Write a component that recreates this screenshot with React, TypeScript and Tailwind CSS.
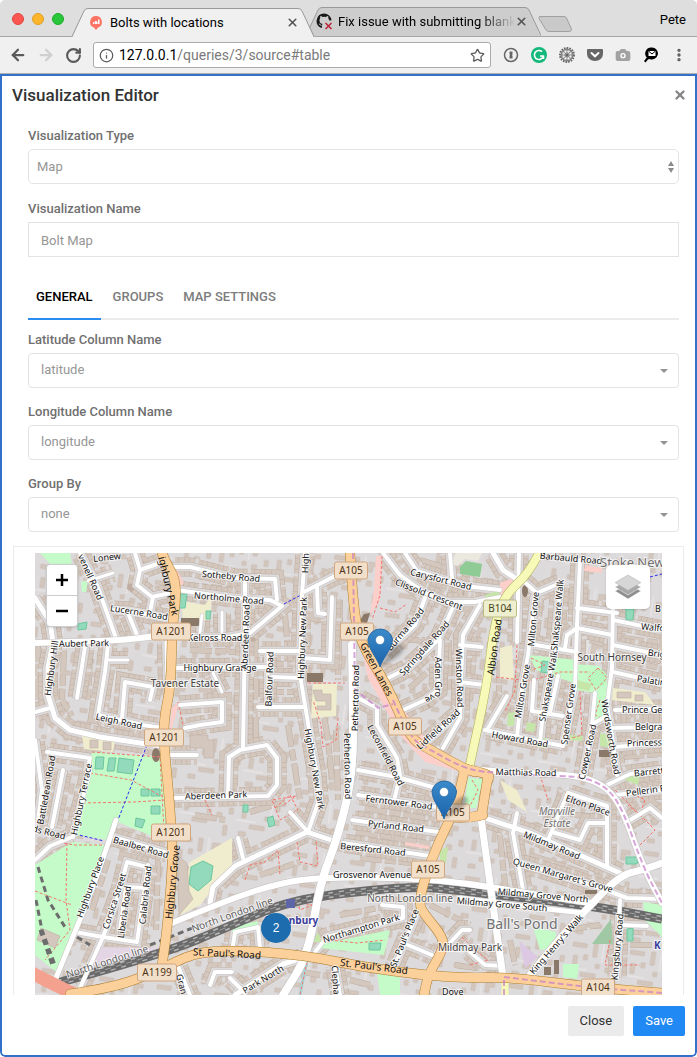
import React, { useState } from 'react';
import { ArrowLeft, ArrowRight, RotateCw, Info, Star, MoreVertical, Camera, X } from 'lucide-react';

type Point = [number, number];

type Road = { w: number; pts: string };

type Label = {
  text: string;
  x: number;
  y: number;
  r?: number;
  size?: number;
  kind?: 'road' | 'place' | 'district' | 'rail' | 'station' | 'estate';
  start?: boolean;
};

// Residential streets: stroke width and polyline
const STREETS: Road[] = [
  { w: 4, pts: '80,553 97,585 117,641' },
  { w: 4, pts: '112,610 130,611 167,618' },
  { w: 4, pts: '135,553 140,570 137,585 152,597 170,593' },
  { w: 4, pts: '140,570 160,563' },
  { w: 4, pts: '153,597 150,612' },
  { w: 4, pts: '128,613 137,635' },
  { w: 3, pts: '88,581 113,573' },
  { w: 5, pts: '35,598 50,622 53,642 48,668 48,695 55,718 70,730 100,737 147,744 162,746' },
  { w: 4, pts: '35,712 50,708' },
  { w: 4, pts: '85,647 77,698' },
  { w: 4, pts: '108,645 105,672 98,715 143,725 162,728' },
  { w: 3, pts: '108,660 128,660' },
  { w: 4, pts: '122,718 125,682 153,687 150,700' },
  { w: 4, pts: '173,567 190,567 235,578 275,579 277,600' },
  { w: 4, pts: '177,590 235,598 270,600 282,606 250,633 228,637 190,637' },
  { w: 3, pts: '202,615 200,632' },
  { w: 3, pts: '222,612 222,632' },
  { w: 4, pts: '245,580 245,632 243,748' },
  { w: 4, pts: '175,668 265,667' },
  { w: 3, pts: '166,642 167,685' },
  { w: 4, pts: '185,728 200,725 222,722 222,702 180,705' },
  { w: 3, pts: '213,673 222,692' },
  { w: 4, pts: '170,755 197,755' },
  { w: 4, pts: '228,795 229,757 240,750 267,745 277,758 277,785 268,796 175,798' },
  { w: 4, pts: '47,752 90,758 87,772' },
  { w: 4, pts: '35,740 42,790 38,820' },
  { w: 4, pts: '305,553 302,595 300,675 310,735 317,775 319,800 308,832' },
  { w: 4, pts: '302,593 333,577 350,572' },
  { w: 4, pts: '317,587 318,613 325,614' },
  { w: 4, pts: '332,597 330,660 303,658' },
  { w: 4, pts: '260,651 300,651' },
  { w: 4, pts: '272,677 302,678' },
  { w: 4, pts: '258,707 305,707' },
  { w: 3, pts: '268,655 268,705' },
  { w: 4, pts: '358,698 377,708 377,725 397,758 400,775 395,797' },
  { w: 4, pts: '383,553 400,575 425,593 447,602 475,602 500,597' },
  { w: 4, pts: '405,553 417,571 465,586 500,590' },
  { w: 4, pts: '450,553 452,578' },
  { w: 4, pts: '425,598 415,625 385,652' },
  { w: 4, pts: '454,605 438,640 408,668 388,678' },
  { w: 4, pts: '440,640 438,690 425,700 403,710' },
  { w: 4, pts: '480,605 463,635 461,680 460,718 443,748' },
  { w: 4, pts: '460,712 423,745' },
  { w: 4, pts: '460,645 482,647' },
  { w: 4, pts: '460,682 484,685' },
  { w: 5, pts: '493,553 503,570 518,580' },
  { w: 4, pts: '519,553 517,642' },
  { w: 4, pts: '520,578 537,593 560,583' },
  { w: 4, pts: '535,595 528,655 522,688 517,737' },
  { w: 4, pts: '560,585 555,645 543,712 540,742' },
  { w: 4, pts: '580,560 577,625 575,688 563,745' },
  { w: 4, pts: '530,644 577,652' },
  { w: 4, pts: '565,648 567,635 577,628 612,635' },
  { w: 4, pts: '577,608 617,613' },
  { w: 4, pts: '613,600 612,668 607,705 612,735 617,775' },
  { w: 4, pts: '613,620 662,630' },
  { w: 4, pts: '613,645 662,655' },
  { w: 4, pts: '613,672 662,683' },
  { w: 4, pts: '615,710 662,709' },
  { w: 4, pts: '610,728 662,727' },
  { w: 4, pts: '615,747 662,743' },
  { w: 4, pts: '532,711 563,716' },
  { w: 4, pts: '534,680 532,711' },
  { w: 4, pts: '558,676 550,712' },
  { w: 4, pts: '485,730 563,746' },
  { w: 4, pts: '507,696 487,730' },
  { w: 4, pts: '595,693 592,725 583,775' },
  { w: 4, pts: '592,724 607,716' },
  { w: 4, pts: '607,785 630,774 662,770' },
  { w: 4, pts: '615,795 662,790' },
  { w: 4, pts: '625,823 650,808 662,818' },
  { w: 5, pts: '485,818 530,833 620,873' },
  { w: 4, pts: '517,813 513,833 523,890' },
  { w: 4, pts: '568,793 548,840' },
  { w: 4, pts: '568,793 607,806 607,867' },
  { w: 4, pts: '552,832 580,840 588,823 607,823' },
  { w: 4, pts: '517,862 560,875 600,888 627,898 662,899' },
  { w: 4, pts: '620,900 617,977' },
  { w: 4, pts: '622,925 647,926' },
  { w: 4, pts: '358,795 437,807' },
  { w: 4, pts: '358,770 397,777 443,790' },
  { w: 4, pts: '352,820 438,832' },
  { w: 4, pts: '343,843 430,856' },
  { w: 4, pts: '417,913 393,970' },
  { w: 4, pts: '315,952 327,937 403,918 403,907 382,905' },
  { w: 4, pts: '403,943 432,955' },
  { w: 4, pts: '35,860 50,846 72,837' },
  { w: 4, pts: '110,836 167,853' },
  { w: 4, pts: '75,932 103,937 137,942 148,865' },
  { w: 4, pts: '80,988 103,937 120,890 127,862 147,867' },
  { w: 4, pts: '120,930 126,887 146,888' },
  { w: 4, pts: '90,770 73,837' },
  { w: 4, pts: '63,770 52,827' },
  { w: 5, pts: '210,903 213,887 235,866 307,832 337,842' },
  { w: 4, pts: '290,812 308,832' },
  { w: 4, pts: '238,838 243,858' },
  { w: 4, pts: '233,945 235,932 258,927 260,948' },
  { w: 4, pts: '230,978 245,993' },
  { w: 5, pts: '235,995 283,964 305,957' },
  { w: 4, pts: '335,966 340,995' },
  { w: 4, pts: '178,966 190,995' },
  { w: 4, pts: '210,985 215,972 232,972' },
  { w: 4, pts: '470,930 462,930 448,945' },
  { w: 4, pts: '468,950 485,965 503,966' },
];

// Back gardens: extra rows of houses with no street of their own
const TERRACES: string[] = [
  '38,640 36,700',
  '64,650 62,700 72,716',
  '90,650 88,700',
  '186,585 265,592',
  '190,650 235,652',
  '256,600 256,745',
  '285,615 288,650',
  '262,664 298,664',
  '262,692 298,692',
  '288,725 300,800',
  '318,680 328,740 333,790',
  '340,600 338,680',
  '336,730 338,800',
  '420,560 470,575',
  '397,640 425,640',
  '410,688 430,670',
  '449,640 449,690',
  '475,640 470,700',
  '380,770 350,760',
  '365,808 435,820',
  '356,832 432,844',
  '360,858 420,864',
  '500,660 498,720',
  '590,640 605,645',
  '622,638 660,643',
  '622,660 660,668',
  '622,718 660,718',
  '622,736 660,735',
  '622,757 660,754',
  '500,835 505,885',
  '535,825 600,850',
  '530,855 590,875',
  '535,870 600,895',
  '575,815 600,817',
  '340,915 395,905',
  '430,905 470,925',
  '510,940 515,965',
  '565,930 600,925',
  '630,945 655,945',
  '92,910 108,860',
  '158,860 156,930',
  '130,955 150,945',
  '260,965 320,975',
  '350,980 370,985',
  '455,965 490,970',
  '195,815 225,820',
  '250,812 285,802',
  '260,875 300,862',
];

// Wider unclassified roads
const WIDE_ROADS: Road[] = [
  { w: 6, pts: '35,643 113,641 150,637 168,634' },
  { w: 8, pts: '352,645 353,700 353,775 337,840 320,883 308,955 283,995' },
  { w: 6, pts: '460,767 490,772 556,774 583,777 607,787 623,810 643,867 662,903' },
  { w: 7, pts: '481,818 487,862 503,977' },
  { w: 7, pts: '662,863 643,870 620,875 583,913 560,938 530,975' },
  { w: 6, pts: '172,923 230,899 280,883 323,877 410,878 465,883 520,892 590,903' },
  { w: 5, pts: '460,898 520,906 583,913' },
  { w: 5, pts: '116,820 97,877 77,927 53,985' },
];

const A_ROADS: string[] = [
  '162,553 167,565 175,578 176,600 172,628 171,685 164,718 164,745 167,775 171,820 173,863 167,930 162,966',
  '350,553 353,605 360,642 387,685 410,738 427,748 463,768 475,772',
  '462,768 488,774 489,776 488,780',
  '488,776 484,800 482,814 478,816',
  '483,815 470,818 448,817',
  '464,772 457,805 447,825 430,862 418,903 425,915 443,937 443,950 428,975 424,995',
  '70,994 113,988 160,970 193,953 235,950 303,955 363,967 423,975 465,978 510,977 587,987 662,993',
];

const B_ROAD = '539,553 530,572 503,597 493,632 487,685 470,764';

const RAILWAY = '57,983 160,955 235,924 273,907 323,895 417,886 465,891 587,905 662,919';

const PARKS: string[] = [
  '40,553 70,553 73,573 52,566',
  '92,752 163,757 166,842 118,822 108,840 74,835',
  '72,842 107,845 60,975 35,955 35,865',
  '529,655 577,660 574,683 536,670',
  '575,664 600,666 610,690 604,720 594,722 596,693 577,690',
  '317,945 390,930 384,955 320,948',
  '377,972 400,973 400,995 380,995',
  '468,778 483,779 476,808 464,808',
  '533,927 556,932 555,948 540,950',
  '563,964 579,964 577,979 563,977',
  '643,902 662,905 662,937 645,920',
  '81,582 88,580 86,592 82,592',
  '232,927 258,921 258,928 232,935',
];

const GRASS: string[] = [
  '508,713 515,712 514,726 507,726',
  '527,722 536,724 534,732 526,731',
  '600,733 613,735 612,748 600,746',
  '618,777 640,774 638,785',
  '440,850 448,847 446,863 440,862',
  '485,595 500,590 498,600 486,601',
  '537,737 548,739 546,748 537,747',
  '570,735 583,736 582,741 569,740',
  '577,680 592,684 589,691 576,688',
  '313,942 318,932 322,942',
];

const PITCHES: string[] = [
  '96,757 104,757 103,769 95,769',
  '109,758 116,758 114,771 107,771',
  '119,758 134,760 132,774 117,772',
  '141,789 149,789 149,796 141,796',
  '151,789 160,789 160,796 151,796',
  '151,806 160,806 160,814 151,814',
  '136,818 145,820 142,828 135,826',
  '191,867 203,861 213,866 211,880 198,891 189,884',
  '180,594 187,594 185,608 179,608',
  '206,611 211,611 210,619 206,619',
  '78,624 87,622 86,629 78,630',
  '542,661 550,662 548,673 541,672',
  '626,609 634,609 633,620 626,620',
  '267,818 273,816 275,825 269,827',
  '369,943 381,943 380,950 369,950',
  '626,857 639,857 637,864 626,864',
  '627,929 633,928 633,941 627,941',
  '243,805 248,805 248,812 243,812',
];

const SCHOOLS: string[] = [
  '181,601 205,605 212,595 210,620 183,620',
  '313,684 337,684 336,716 311,718',
  '500,648 512,645 514,680 500,678',
  '82,736 115,741 113,752 84,749',
  '500,780 517,790 527,812 508,800',
  '190,862 232,838 232,865 200,905 180,915',
  '613,688 645,692 655,705 612,700',
  '125,808 137,813 134,826 124,822',
];

const RETAIL: string[] = [
  '362,650 378,662 400,705 432,747 462,764 462,772 425,762 400,735 368,678',
  '176,568 184,583 181,586 174,572',
  '172,708 180,700 172,728 168,738',
  '376,556 382,556 380,600 370,615 374,590',
  '500,583 516,577 510,592 500,594',
  '585,565 602,568 602,573 584,571',
  '405,842 430,846 428,849 405,845',
];

const FOOTPATHS: string[] = [
  '92,752 160,757 164,830',
  '90,773 131,780 163,797',
  '83,803 135,802 165,800',
  '67,843 66,900 70,930 45,960',
  '35,891 72,905',
  '107,845 75,845 62,843',
  '382,556 380,595 372,620',
  '380,608 395,612 407,604',
  '308,683 345,683',
  '338,718 336,740 323,747 321,725 313,700',
  '517,645 515,690 505,712',
  '496,677 530,681 560,672 590,672',
  '580,692 582,735 565,740',
  '531,658 545,665 532,670',
  '598,668 607,678 596,690 588,678 598,668',
  '600,700 595,715 605,720',
  '275,808 290,795 298,810 280,820 272,800 296,796 282,806',
  '245,880 250,865 265,862 278,850 280,875',
  '297,842 300,862 318,866 316,840',
  '296,897 300,910 312,905 298,902',
  '307,962 300,995',
  '330,940 357,943 385,940',
  '178,702 184,730',
  '205,800 212,815',
  '615,790 635,810 655,830 640,845',
  '632,793 645,800 640,815 628,805',
  '540,775 548,800',
  '610,940 605,965 640,965',
  '462,937 475,950 488,960 470,965',
  '472,780 478,790 470,806',
];

const LABELS: Label[] = [
  { text: 'venell Road', x: 91, y: 577, r: 66 },
  { text: 'Lonew', x: 107, y: 557, r: -6 },
  { text: 'ighbury Park', x: 169, y: 586, r: 77, size: 10 },
  { text: 'Sotheby Road', x: 231, y: 576, r: 5 },
  { text: 'Northolme Road', x: 229, y: 598, r: 5 },
  { text: 'Lucerne Road', x: 139, y: 612, r: 9 },
  { text: 'Kelross Road', x: 215, y: 637 },
  { text: 'Highbury Hill', x: 51, y: 668, r: -82 },
  { text: 'Aubert Park', x: 84, y: 643, r: -1 },
  { text: 'Highbury Grange', x: 220, y: 667 },
  { text: 'Tavener Estate', x: 185, y: 683, size: 10, kind: 'place' },
  { text: 'Leigh Road', x: 119, y: 721, r: 12 },
  { text: 'Highbury New Park', x: 302, y: 638, r: -88 },
  { text: 'Highbury New Park', x: 315, y: 769, r: 80 },
  { text: 'High', x: 305, y: 563, r: -88 },
  { text: 'Aberdeen Road', x: 245, y: 637, r: -88 },
  { text: 'Balfour Road', x: 269, y: 679, r: -88 },
  { text: 'Petherton Road', x: 355, y: 698, r: -89 },
  { text: 'Petherton Road', x: 348, y: 766, r: 89 },
  { text: 'Green Lanes', x: 377, y: 669, r: 62, size: 10 },
  { text: 'Burma Road', x: 405, y: 629, r: -50 },
  { text: 'Springdale Road', x: 424, y: 648, r: -48 },
  { text: 'Aden Gro', x: 438, y: 677, r: 90 },
  { text: 've', x: 430, y: 699, r: 150 },
  { text: 'Winston Road', x: 460, y: 678, r: 88 },
  { text: 'Lidfield Road', x: 438, y: 729, r: -42 },
  { text: 'Leconfield Road', x: 386, y: 755, r: 62 },
  { text: 'Carysfort Road', x: 441, y: 579, r: 14 },
  { text: 'Clissold Crescent', x: 429, y: 594, r: 21 },
  { text: 'Barbauld Road', x: 571, y: 558, r: 5 },
  { text: 'Stoke New', x: 600, y: 562, size: 13, kind: 'district', start: true },
  { text: 'Milton Grove', x: 533, y: 619, r: -85 },
  { text: 'Milton Grove', x: 522, y: 691, r: -80 },
  { text: 'Shakspeare Walk', x: 557, y: 615, r: -85 },
  { text: 'Shakspeare Walk', x: 548, y: 686, r: -80 },
  { text: 'Spenser Grove', x: 568, y: 714, r: -82 },
  { text: 'South Hornsey', x: 612, y: 657, size: 10, kind: 'place' },
  { text: 'B', x: 655, y: 608, start: true },
  { text: 'Walfo', x: 641, y: 626, r: 5, start: true },
  { text: 'Brig', x: 648, y: 652, r: 8, start: true },
  { text: 'Palatin', x: 637, y: 678, r: 9, start: true },
  { text: 'Prince Geo', x: 622, y: 709, start: true },
  { text: 'Belgrac', x: 635, y: 726, start: true },
  { text: 'Princess', x: 627, y: 743, r: -2, start: true },
  { text: 'Barrett', x: 634, y: 773, r: -6, start: true },
  { text: 'Pellerin R', x: 626, y: 793, r: -8, start: true },
  { text: 'Wordsworth Road', x: 611, y: 737, r: 80 },
  { text: 'Cowper Road', x: 587, y: 752, r: -78 },
  { text: 'Howard Road', x: 520, y: 739, r: 10 },
  { text: 'Matthias Road', x: 526, y: 772, r: 1 },
  { text: 'Albion Road', x: 494, y: 647, r: -82, size: 10 },
  { text: 'Battledean Road', x: 46, y: 790, r: -80 },
  { text: 'Highbury Terrace', x: 81, y: 799, r: -78 },
  { text: 'ds Road', x: 49, y: 832, r: 14 },
  { text: 'Aberdeen Park', x: 216, y: 795, r: -2 },
  { text: 'Baalbec Road', x: 141, y: 847, r: 16 },
  { text: 'Highbury Place', x: 90, y: 887, r: -70 },
  { text: 'Corsica Street', x: 114, y: 901, r: -72 },
  { text: 'Liberia Road', x: 124, y: 912, r: -82 },
  { text: 'Calabria Road', x: 145, y: 895, r: -84 },
  { text: 'Highbury Grove', x: 172, y: 882, r: -84, size: 10 },
  { text: 'North London line', x: 107, y: 961, r: -18, kind: 'rail', size: 10 },
  { text: 'North London line', x: 232, y: 914, r: -20, kind: 'rail', size: 10 },
  { text: "St. Paul's Road", x: 227, y: 953, r: 3, size: 10 },
  { text: 'Gran', x: 182, y: 984, r: 75 },
  { text: 'Ferntower Road', x: 399, y: 802, r: 7 },
  { text: 'Pyrland Road', x: 396, y: 826, r: 6 },
  { text: 'Beresford Road', x: 373, y: 849, r: 6 },
  { text: 'Grosvenor Avenue', x: 372, y: 874 },
  { text: 'North London line', x: 410, y: 898, kind: 'rail', size: 10 },
  { text: 'Mildmay Grove North', x: 543, y: 895, r: 5 },
  { text: 'Mildmay Grove South', x: 502, y: 904, r: 5 },
  { text: 'Canonbury', x: 291, y: 920, size: 10, kind: 'station' },
  { text: 'Northampton Park', x: 361, y: 928, r: -17 },
  { text: "St. Paul's Place", x: 404, y: 938, r: -68 },
  { text: "St. Paul's Road", x: 374, y: 966, r: 7, size: 10 },
  { text: 'Mildmay Park', x: 470, y: 947, size: 10, kind: 'place' },
  { text: 'Clepha', x: 336, y: 980, r: 86 },
  { text: 'Park North', x: 263, y: 979, r: -31 },
  { text: 'Dove', x: 442, y: 991, start: true },
  { text: 'Elton Place', x: 588, y: 805, r: 19 },
  { text: 'Mayville', x: 557, y: 811, size: 10, kind: 'estate' },
  { text: 'Estate', x: 557, y: 823, size: 10, kind: 'estate' },
  { text: 'Mildmay Road', x: 552, y: 845, r: 22 },
  { text: "Queen Margaret's Grove", x: 563, y: 875, r: 16 },
  { text: "Ball's Pond", x: 522, y: 923, size: 14, kind: 'district' },
  { text: "King Henry's Walk", x: 556, y: 944, r: -49 },
  { text: 'Kingsbury Road', x: 617, y: 947, r: -85 },
  { text: 'K', x: 654, y: 945, size: 10, kind: 'station', start: true },
];

const SHIELDS = [
  { text: 'A1201', x: 171, y: 631 },
  { text: 'A1201', x: 164, y: 737 },
  { text: 'A1201', x: 171, y: 832 },
  { text: 'A1199', x: 157, y: 972 },
  { text: 'A105', x: 351, y: 570 },
  { text: 'A105', x: 357, y: 631 },
  { text: 'A105', x: 405, y: 726 },
  { text: 'A105', x: 453, y: 812 },
  { text: 'A105', x: 428, y: 869 },
  { text: 'A104', x: 598, y: 987 },
  { text: 'B104', x: 500, y: 608 },
];

const LABEL_COLORS = {
  road: '#111',
  place: '#3f3f3f',
  district: '#707070',
  rail: '#5f5f5f',
  station: '#3a3c9e',
  estate: '#707070',
};

// Rounds the corners of a polyline by running curves through the midpoints
function smooth(pts: string) {
  const p = pts.split(' ').map((s) => s.split(',').map(Number) as Point);
  let d = `M${p[0][0]} ${p[0][1]}`;
  for (let i = 1; i < p.length - 1; i++) {
    const mx = (p[i][0] + p[i + 1][0]) / 2;
    const my = (p[i][1] + p[i + 1][1]) / 2;
    d += ` Q${p[i][0]} ${p[i][1]} ${mx} ${my}`;
  }
  const last = p[p.length - 1];
  return `${d} L${last[0]} ${last[1]}`;
}

function Marker({ x, y }: { x: number; y: number }) {
  return (
    <g transform={`translate(${x} ${y})`}>
      <path d="M0 0 L9 -16 Q20 -27 24 -20 Q25 -12 0 0Z" fill="#000" opacity="0.25" filter="url(#soft)" />
      <path
        d="M0 0 C-2 -8 -12 -18 -12 -28 A12.500 12.500 0 0 1 12.500 -28 C12.500 -18 2 -8 0 0Z"
        fill="url(#pin)"
        stroke="#2a6ba5"
      />
      <circle cx="0" cy="-27" r="4.500" fill="#fff" stroke="#2468a4" strokeWidth="0.500" />
    </g>
  );
}

function StreetMap() {
  return (
    <svg viewBox="35 553 627 442" className="block w-full" role="img" aria-label="Map of bolt locations">
      <defs>
        <linearGradient id="pin" x1="0" y1="0" x2="0" y2="1">
          <stop offset="0" stopColor="#3b8bcb" />
          <stop offset="1" stopColor="#1b62ab" />
        </linearGradient>
        <filter id="soft" x="-50%" y="-50%" width="200%" height="200%">
          <feGaussianBlur stdDeviation="1.500" />
        </filter>
        <pattern id="houses" width="58" height="50" patternUnits="userSpaceOnUse" patternTransform="rotate(8)">
          <g fill="#d3c7be" stroke="#c4b5aa" strokeWidth="0.600">
            <path d="M3 3h14v4H3zM24 2h4v13h-4zM38 5h9v4h-5v6h-4zM5 16h4v10H5zM15 14h4v5h-4zM14 32h15v4H14zM38 24h5v5h-5zM46 36h4v10h-4zM4 40h7v4H4zM50 18h4v6h-4zM28 22h4v4h-4z" />
          </g>
          <path d="M0 29H20M34 0V20" fill="none" stroke="#eeeaea" strokeWidth="1" />
        </pattern>
      </defs>

      <rect x="35" y="553" width="627" height="442" fill="#dddadb" />
      <rect x="35" y="553" width="627" height="442" fill="url(#houses)" />

      {/* terraces on both sides of each street */}
      <g fill="none">
        {TERRACES.map((p, i) => <polyline key={i} points={p} stroke="#bfaea1" strokeWidth="6" strokeDasharray="22 3 11 3" />)}
        {TERRACES.map((p, i) => <polyline key={i} points={p} stroke="#d3c7be" strokeWidth="5" strokeDasharray="22 3 11 3" />)}
        {STREETS.map((s, i) => <polyline key={i} points={s.pts} stroke="#bfaea1" strokeWidth={s.w + 15} />)}
        {STREETS.map((s, i) => <polyline key={i} points={s.pts} stroke="#d3c7be" strokeWidth={s.w + 14} />)}
        {STREETS.map((s, i) => <polyline key={i} points={s.pts} stroke="#bfaea1" strokeWidth={s.w + 14} strokeDasharray="0.500 5" />)}
        {STREETS.map((s, i) => <polyline key={i} points={s.pts} stroke="#dddadb" strokeWidth={s.w + 16} strokeDasharray="2 19 3 31" />)}
        {STREETS.map((s, i) => <polyline key={i} points={s.pts} stroke="#bfaea1" strokeWidth={s.w + 6} />)}
        {STREETS.map((s, i) => <polyline key={i} points={s.pts} stroke="#dddadb" strokeWidth={s.w + 5} />)}
      </g>

      <g stroke="none">
        {RETAIL.map((p, i) => <polygon key={i} points={p} fill="#fccfcb" />)}
        {SCHOOLS.map((p, i) => <polygon key={i} points={p} fill="#efedce" />)}
        {PARKS.map((p, i) => <polygon key={i} points={p} fill="#c5fbc8" />)}
        {GRASS.map((p, i) => <polygon key={i} points={p} fill="#c6e6a9" />)}
        <circle cx="598" cy="678" r="9" fill="#b8f7be" />
        {PITCHES.map((p, i) => <polygon key={i} points={p} fill="#92dabb" stroke="#6cc79d" strokeWidth="1" />)}
        <path d="M460 567L466 561L482 564L480 577L460 574Z" fill="#8fcb94" />
        <path d="M455 553H482L478 561L465 559L458 566L452 565Z" fill="#ebe8df" />
        <path d="M592 944L611 919L613 944Z" fill="#a0c8a4" />
        <path d="M95 947L165 948L150 957L90 965Z" fill="#e3d5e4" />
        <path d="M519 941L538 957L525 968Z" fill="#dcc8e2" />
        <path d="M307 960L300 995" stroke="#a9d6d8" strokeWidth="3" />
      </g>
      <g fill="#d3c7be" stroke="#bfaea1" strokeWidth="0.600">
        <path d="M313 690h9v4h9v16h-14v-4h9v-5h-10z" />
        <path d="M177 855l10 8 2 28 4 8 -14 16z" />
        <path d="M90 740h8v8h-8zM103 742h8v8h-8z" />
        <path d="M617 692h14v6h-14zM635 695h8v6h-8z" />
        <path d="M41 928l19 8 -5 12 -18 -8z" />
        <path d="M190 735h18v5h6v18h-10v-10h-14z" />
      </g>
      <g fill="#8a7868">
        <path d="M181 618h18v8h-18z" />
        <path d="M307 673h16v9h-16z" />
        <path d="M364 614l6 -1 -3 10 -8 -1z" />
        <ellipse cx="156" cy="755" rx="4" ry="7" />
        <ellipse cx="525" cy="591" rx="3" ry="6" />
        <path d="M599 750h12v7h-12zM544 967h7v8h-7zM554 960h5v14h-5zM585 890h12v4h-12z" />
      </g>

      <g fill="none" stroke="#f4766c" strokeWidth="1" strokeDasharray="3 2">
        {FOOTPATHS.map((p, i) => <polyline key={i} points={p} />)}
      </g>
      <g fill="none" stroke="#2a2af0" strokeWidth="1" strokeDasharray="3 2">
        <path d="M147 745L118 820M75 834L104 841M284 604L301 595M612 660L611 672M650 577L662 574" />
      </g>

      {/* railway */}
      <g fill="none">
        <path d={smooth(RAILWAY)} stroke="#6a6a6a" strokeWidth="9" />
        <path d={smooth(RAILWAY)} stroke="#b4b4b4" strokeWidth="6" strokeDasharray="5 6" />
        <path d={smooth(RAILWAY)} stroke="#6a6a6a" strokeWidth="3" />
        <path d={smooth(RAILWAY)} stroke="#a0a0a0" strokeWidth="1" strokeDasharray="6 5" strokeDashoffset="5" />
        <path d="M38 867L48 900L65 927M36 900L42 930L55 965M40 930L52 965M77 937L90 945M150 945L200 925" stroke="#6d6d6d" strokeWidth="3" strokeDasharray="6 4" />
      </g>

      <g fill="none" strokeLinecap="round" strokeLinejoin="round">
        {STREETS.map((s, i) => (
          <polyline key={i} points={s.pts} stroke="#c9c5c4" strokeWidth={s.w + 1} />
        ))}
        {STREETS.map((s, i) => (
          <polyline key={i} points={s.pts} stroke="#fff" strokeWidth={s.w} />
        ))}
        {WIDE_ROADS.map((s, i) => (
          <path key={i} d={smooth(s.pts)} stroke="#c2bfbe" strokeWidth={s.w + 1} />
        ))}
        {WIDE_ROADS.map((s, i) => (
          <path key={i} d={smooth(s.pts)} stroke="#fff" strokeWidth={s.w} />
        ))}
        <path d={smooth('30,972 57,986 85,999')} stroke="#f5a18f" strokeWidth="13" />
        <path d={smooth(B_ROAD)} stroke="#b0ae55" strokeWidth="9" />
        <path d={smooth(B_ROAD)} stroke="#f7f9b8" strokeWidth="8" />
        <path d="M505 978V995" stroke="#f7f9b8" strokeWidth="7" />
        {A_ROADS.map((p, i) => (
          <path key={i} d={smooth(p)} stroke="#ad7d2c" strokeWidth="10" />
        ))}
        {A_ROADS.map((p, i) => (
          <path key={i} d={smooth(p)} stroke="#fcd09b" strokeWidth="9" />
        ))}
      </g>

      {/* borough boundary */}
      <g fill="none" stroke="#c77fc9" strokeWidth="2" strokeDasharray="6 3" opacity="0.700">
        <path d="M353 553L355 690Q375 705 378 708L393 704" />
        <path d={smooth('393,700 410,738 427,748 463,768 490,773 556,776 583,777 607,787 623,810 643,867 662,903')} />
        <path d="M504 995V977L587 987L662 993" />
      </g>

      <rect x="286" y="899" width="9" height="9" fill="#5f66a8" />

      <g fontFamily='"Noto Sans", sans-serif' textAnchor="middle">
        {LABELS.map((l, i) => {
          const kind = l.kind ?? 'road';
          return (
            <text
              key={i}
              transform={`translate(${l.x} ${l.y}) rotate(${l.r ?? 0})`}
              dominantBaseline="central"
              textAnchor={l.start ? 'start' : 'middle'}
              fontSize={l.size ?? 9}
              fontWeight={kind === 'station' ? 700 : 400}
              fontStyle={kind === 'estate' ? 'italic' : 'normal'}
              fill={LABEL_COLORS[kind]}
              stroke="#fff"
              strokeOpacity="0.700"
              strokeWidth={l.size === 10 && kind === 'road' ? 0 : 2}
              paintOrder="stroke"
            >
              {l.text}
            </text>
          );
        })}
        {SHIELDS.map((s, i) => {
          const w = s.text.length === 5 ? 39 : 33;
          const yellow = s.text[0] === 'B';
          return (
            <g key={i}>
              <rect
                x={s.x - w / 2}
                y={s.y - 8}
                width={w}
                height="17"
                rx="2"
                fill={yellow ? '#eeefcf' : '#f2dfca'}
                stroke={yellow ? '#b9bb83' : '#cfa67f'}
              />
              <text x={s.x} y={s.y + 4} fontSize="10" fill={yellow ? '#45461c' : '#4f3313'}>
                {s.text}
              </text>
            </g>
          );
        })}
      </g>

      <Marker x={380} y={667} />
      <Marker x={444} y={819} />
      <circle cx="276" cy="928" r="15" fill="#1c6cae" />
      <text x="276" y="932" textAnchor="middle" fontSize="12" fill="#fff" fontFamily='"Liberation Sans", sans-serif'>
        2
      </text>
    </svg>
  );
}

function TabShape({ width, fill }: { width: number; fill: string }) {
  return (
    <svg className="absolute inset-0" width={width} height="29" viewBox={`0 0 ${width} 29`} aria-hidden="true">
      <path
        d={`M0 29 L1 28 L12 3 Q13 0.500 16 0.500 H${width - 16} Q${width - 13} 0.500 ${width - 12} 3 L${width - 1} 28 L${width} 29Z`}
        fill={fill}
      />
      <path
        d={`M0 28.500 L12 3 Q13 0.500 16 0.500 H${width - 16} Q${width - 13} 0.500 ${width - 12} 3 L${width} 28.500`}
        fill="none"
        stroke="#999"
      />
    </svg>
  );
}

function BrowserChrome() {
  return (
    <header className="font-[Roboto,sans-serif] text-black">
      <div className="flex h-[37px] items-end border-b border-[#a5a5a5] bg-[#dedede]">
        <div className="flex h-full w-[72px] shrink-0 gap-2 pt-[13px] pl-3">
          <button type="button" aria-label="Close window" className="size-3 rounded-full border border-[#e2463f] bg-[#fc5650]" />
          <button type="button" aria-label="Minimize window" className="size-3 rounded-full border border-[#dfa023] bg-[#fdb62c]" />
          <button type="button" aria-label="Zoom window" className="size-3 rounded-full border border-[#1dad2b] bg-[#28c638]" />
        </div>
        <div className="relative z-10 -mb-px h-[29px] w-[242px] shrink-0">
          <TabShape width={242} fill="#f0f0f0" />
          <div className="relative flex h-full items-center pr-[15px] pl-[18px] text-[13px]">
            <svg width="12" height="14" viewBox="0 0 12 14" className="mr-2 shrink-0" aria-hidden="true">
              <path d="M6 0a6 6 0 0 1 2 11.600L6 14l-2-2.400A6 6 0 0 1 6 0z" fill="#fb7464" />
              <path d="M3 8V6h1.500v2zM5 8V5h1.500v3zM6.500 8V5.500h1V8zM8 8V3.500h1.500V8z" fill="#fff" />
            </svg>
            <span className="grow truncate">Bolts with locations</span>
            <button type="button" aria-label="Close tab" className="text-[#555]">
              <X size={13} strokeWidth={3} />
            </button>
          </div>
        </div>
        <div className="relative -ml-2 h-[29px] w-[235px] shrink-0">
          <TabShape width={235} fill="#cdcdcd" />
          <div className="relative flex h-full items-center pr-[13px] pl-[10px] text-[13px]">
            <svg width="17" height="17" viewBox="0 0 17 17" className="mr-[5px] shrink-0" aria-hidden="true">
              <path
                d="M8 0.500a7.500 7.500 0 0 0-3 14.300c.6.200 1 0 1-.6v-1.700c-2 .4-2.600-.8-3-1.500-.3-.5.700-.6 1.300.3.500.8 1 .9 1.800.6.1-.5.300-.8.500-1C4 10.500 3.500 9 3.500 7.200c0-.9.3-1.600.8-2.100-.2-.7-.2-1.400.1-2 .9 0 1.600.5 2.100.9a8 8 0 0 1 3.500 0c.5-.4 1.200-.9 2.100-.9.3.6.3 1.300.1 2 .5.500.8 1.200.8 2.100l2.500.300A7.500 7.500 0 0 0 8 .5z"
                fill="#191717"
              />
              <path d="M9.500 10l6 6M15.500 10l-6 6" stroke="#bd2136" strokeWidth="1.500" />
            </svg>
            <span className="grow overflow-hidden bg-linear-to-r from-black from-80% to-transparent bg-clip-text whitespace-nowrap text-transparent">
              Fix issue with submitting blank
            </span>
            <button type="button" aria-label="Close tab" className="shrink-0 text-[#555]">
              <X size={13} strokeWidth={3} />
            </button>
          </div>
        </div>
        <button type="button" aria-label="New tab" className="mb-[3px] -ml-[3px]">
          <svg width="34" height="17" viewBox="0 0 34 17">
            <path d="M2 0.500H26q2 0 2.500 1.500l5 11q0 2.500-2 2.500H11q-2 0-3-1.500L1 2.500Q0.500 0.500 2 0.500z" fill="#c9c9c9" stroke="#a0a0a0" />
          </svg>
        </button>
        <span className="ml-auto self-center pt-1 pr-[11px] text-[13px]">Pete</span>
      </div>

      <div className="flex h-[37px] items-center border-b border-[#b0b0b0] bg-[#f0f0f0] pr-[10px] pl-[9px] text-[#5a5a5a]">
        <button type="button" aria-label="Back" className="mr-[10px]"><ArrowLeft size={18} strokeWidth={3} /></button>
        <button type="button" aria-label="Forward" className="mr-[10px] text-[#cfcfcf]"><ArrowRight size={18} strokeWidth={3} /></button>
        <button type="button" aria-label="Reload" className="mr-[11px]"><RotateCw size={17} strokeWidth={3} /></button>
        <div className="mr-3 flex h-[26px] min-w-0 grow items-center rounded-[3px] border border-[#ababab] bg-white px-[5px]">
          <Info size={15} strokeWidth={2} className="shrink-0" />
          <a href="#table" className="ml-[5px] grow truncate text-[14px] text-[#7a7a7a]">
            <span className="text-black">127.0.0.1</span>/queries/3/source#table
          </a>
          <button type="button" aria-label="Bookmark"><Star size={15} strokeWidth={2} /></button>
        </div>
        <div className="flex items-center gap-3">
          <button type="button" aria-label="Password manager">
            <svg width="16" height="16" viewBox="0 0 16 16">
              <circle cx="8" cy="8" r="6.500" fill="none" stroke="#666" strokeWidth="1.500" />
              <path d="M6.500 4.500h3v3l-.6.600.6.600v2.800h-3v-3l.6-.6-.6-.6z" fill="#666" />
            </svg>
          </button>
          <button type="button" aria-label="Grammar checker">
            <svg width="16" height="16" viewBox="0 0 16 16">
              <circle cx="8" cy="8" r="8" fill="#15b87b" />
              <path d="M11 4.700A4.500 4.500 0 1 0 12.300 9H9M12.500 12V9" fill="none" stroke="#fff" strokeWidth="1.600" />
            </svg>
          </button>
          <button type="button" aria-label="Extension settings">
            <svg width="16" height="16" viewBox="0 0 16 16">
              <circle cx="8" cy="8" r="7" fill="none" stroke="#666" strokeWidth="2" strokeDasharray="1.600 1.100" />
              <circle cx="8" cy="8" r="6" fill="#b5b5b5" stroke="#747474" />
              <circle cx="8" cy="8" r="3.500" fill="none" stroke="#eee" strokeWidth="1.500" />
              <path d="M8 2v12M2 8h12M4 4l8 8M12 4l-8 8" stroke="#777" strokeWidth="0.700" />
              <circle cx="8" cy="8" r="1.500" fill="#666" />
            </svg>
          </button>
          <button type="button" aria-label="Save to list">
            <svg width="16" height="16" viewBox="0 0 16 16">
              <path d="M1 2h14q1 0 1 1v4a8 7 0 0 1-16 0V3q0-1 1-1z" fill="#676767" />
              <path d="M4.500 6L8 9.300 11.500 6" fill="none" stroke="#fff" strokeWidth="2" strokeLinecap="round" />
            </svg>
          </button>
          <button type="button" aria-label="Screenshot">
            <Camera size={16} strokeWidth={2} fill="#a2a2a2" stroke="#a2a2a2" className="[&_circle]:fill-[#a2a2a2] [&_circle]:stroke-white" />
          </button>
          <button type="button" aria-label="Mail tracker">
            <svg width="16" height="16" viewBox="0 0 16 16">
              <path d="M9 0.500a6 6 0 1 1-2.500 11.500L5 12.500l-2.500 3L1 14l2.800-3.500A6 6 0 0 1 9 0.500z" fill="#000" />
              <path d="M5.500 4h7v5h-7z" fill="#fff" />
              <path d="M5.500 4l3.500 3 3.500-3" fill="none" stroke="#000" />
            </svg>
          </button>
          <button type="button" aria-label="Menu"><MoreVertical size={16} strokeWidth={3} /></button>
        </div>
      </div>
    </header>
  );
}

type ColumnSelectProps = {
  id: string;
  label: string;
  value: string;
};

function ColumnSelect({ id, label, value }: ColumnSelectProps) {
  return (
    <div className="mb-[15px]">
      <label htmlFor={id} className="mb-1 block text-[13px] leading-[18px] font-medium text-[#707070]">{label}</label>
      <div className="relative">
        <select id={id} defaultValue={value} className="h-[35px] w-full appearance-none rounded-[4px] border border-[#e3e3e3] bg-white px-3 pb-[2px] text-[13px] text-[#969696]">
          <option>{value}</option>
        </select>
        <svg width="8" height="4" viewBox="0 0 8 4" className="pointer-events-none absolute top-4 right-[11px]" aria-hidden="true">
          <path d="M0 0h8L4 4z" fill="#949494" />
        </svg>
      </div>
    </div>
  );
}

const TABS = ['General', 'Groups', 'Map Settings'];

export default function App() {
  const [tab, setTab] = useState('General');
  const [name, setName] = useState('Bolt Map');

  return (
    <div className="overflow-hidden rounded-[5px] bg-white">
      <BrowserChrome />
      <main className="rounded-b-[5px] border-2 border-[#3271c9] font-[Roboto,sans-serif]">
        <div className="flex items-center justify-between pt-[7px] pr-2 pl-[10px]">
          <h1 className="text-[17px] leading-[24px] font-medium text-[#333]">Visualization Editor</h1>
          <button type="button" aria-label="Close dialog" className="text-[#858585]"><X size={14} strokeWidth={4} /></button>
        </div>

        <form className="px-4 pt-5 pl-[26px]" onSubmit={(e) => e.preventDefault()}>
          <label htmlFor="type" className="mb-1 block text-[13px] leading-[18px] font-medium text-[#707070]">Visualization Type</label>
          <div className="relative mb-4">
            <select id="type" className="h-[35px] w-full appearance-none rounded-[5px] border border-[#e3e3e3] bg-white px-2 text-[13px] text-[#969696]">
              <option>Map</option>
            </select>
            <svg width="6" height="12" viewBox="0 0 6 12" className="pointer-events-none absolute top-3 right-[5px]" aria-hidden="true">
              <path d="M3 0l3 5H0zM3 12l3-5H0z" fill="#8c8c8c" />
            </svg>
          </div>
          <label htmlFor="name" className="mb-1 block text-[13px] leading-[18px] font-medium text-[#707070]">Visualization Name</label>
          <input
            id="name"
            value={name}
            onChange={(e) => setName(e.target.value)}
            className="block h-[35px] w-full border border-[#e3e3e3] px-3 pt-[2px] text-[13px] text-[#969696]"
          />

          <div role="tablist" className="mt-4 mb-[11px] flex border-b-2 border-[#ebebeb]">
            {TABS.map((t) => (
              <button
                key={t}
                type="button"
                role="tab"
                aria-selected={t === tab}
                onClick={() => setTab(t)}
                className={`-mb-[2px] mr-1 h-[47px] border-b-2 px-2 pt-[2px] text-[13px] font-medium uppercase ${
                  t === tab ? 'border-[#2a8df2] text-black' : 'border-transparent text-[#7c7c7c]'
                }`}
              >
                {t}
              </button>
            ))}
          </div>

          <ColumnSelect id="lat" label="Latitude Column Name" value="latitude" />
          <ColumnSelect id="lng" label="Longitude Column Name" value="longitude" />
          <ColumnSelect id="group" label="Group By" value="none" />
        </form>

        <section className="-mt-px mr-[11px] ml-[11px] border border-b-0 border-[#ebebeb] px-[21px] pt-[6px]">
          <div className="relative">
            <StreetMap />
            <div className="absolute top-[11px] left-[11px] flex w-[32px] flex-col rounded-[4px] border border-black/20 bg-white shadow-sm">
              <button type="button" aria-label="Zoom in" className="flex h-[31px] items-center justify-center border-b border-[#ccc]">
                <svg width="14" height="14" viewBox="0 0 14 14"><path d="M7 1v12M1 7h12" stroke="#000" strokeWidth="2.500" /></svg>
              </button>
              <button type="button" aria-label="Zoom out" className="flex h-[30px] items-center justify-center">
                <svg width="14" height="14" viewBox="0 0 14 14"><path d="M1 7h12" stroke="#000" strokeWidth="2.500" /></svg>
              </button>
            </div>
            <button type="button" aria-label="Layers" className="absolute top-[12px] right-[12px] flex size-[44px] items-center justify-center rounded-[5px] bg-white shadow">
              <svg width="28" height="28" viewBox="0 0 28 28">
                <path d="M1 18l13-7 13 7-13 8z" fill="#8f8f8f" stroke="#fff" strokeWidth="0.500" />
                <path d="M1 14l13-7 13 7-13 8z" fill="#a8a8a8" stroke="#fff" strokeWidth="0.500" />
                <path d="M1 9.500L14 2l13 7.500-13 8z" fill="#d6d6d6" stroke="#b0b0b0" strokeWidth="0.500" />
              </svg>
            </button>
          </div>
        </section>

        <footer className="flex justify-end gap-[9px] pt-[11px] pr-[10px] pb-[19px] text-[13px]">
          <button type="button" className="h-[30px] rounded-[2px] bg-[#ebebeb] px-3 text-[#333]">Close</button>
          <button type="button" className="h-[30px] rounded-[2px] bg-[#2189f3] px-3 text-white">Save</button>
        </footer>
      </main>
    </div>
  );
}
